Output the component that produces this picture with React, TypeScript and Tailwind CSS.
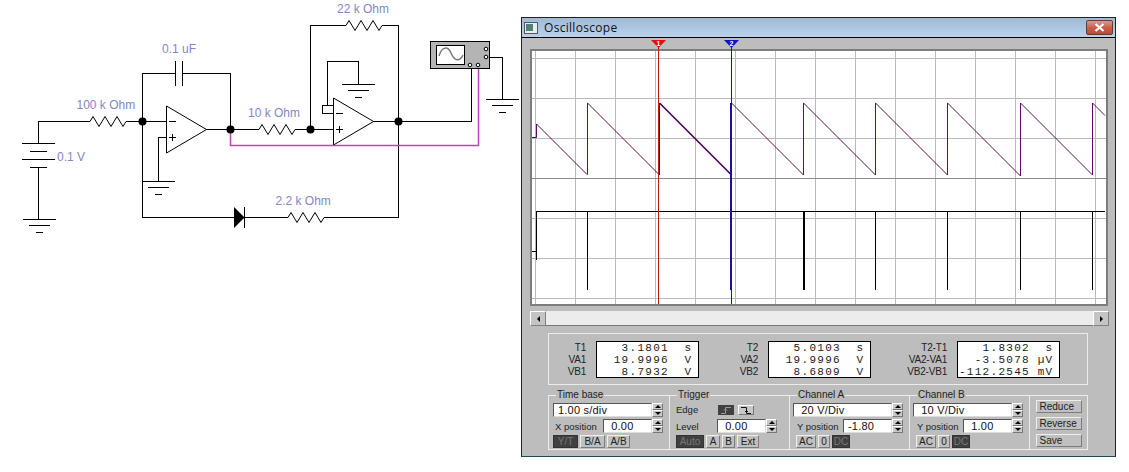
import type { ReactNode } from 'react';

const font = { fontFamily: '"Liberation Sans", Arial, sans-serif' };

const gridX = [535, 575, 615, 655, 695, 735, 775, 815, 855, 895, 935, 975, 1015, 1055, 1095];
const gridY = [58, 98, 138, 178, 218, 258, 298];
const peaks = [587, 659, 731, 803, 875, 947, 1020, 1092];

// zigzag resistor, 36px wide
function Res({ x, y }: { x: number; y: number }) {
  const d = `M${x} ${y}l3 -5l6 10l6 -10l6 10l6 -10l6 10l3 -5`;
  return <path d={d} fill="none" stroke="#000" strokeWidth="1" />;
}

function Gnd({ x, y }: { x: number; y: number }) {
  return (
    <g stroke="#000" shapeRendering="crispEdges">
      <path d={`M${x - 16} ${y}h33`} />
      <path d={`M${x - 10} ${y + 6}h21`} />
      <path d={`M${x - 3} ${y + 13}h7`} />
    </g>
  );
}

function Label({ x, y, children }: { x: number; y: number; children: string }) {
  return (
    <text x={x} y={y} fontSize="12" fill="#8585c4" fontFamily='"Liberation Sans", Arial, sans-serif'>
      {children}
    </text>
  );
}

function Schematic() {
  const nodes = [[142, 121], [230, 129], [310, 129], [398, 121]];
  return (
    <svg width="521" height="472" viewBox="0 0 521 472" className="shrink-0 block">
      <g fill="none" stroke="#000" strokeWidth="1" shapeRendering="crispEdges">
        {/* battery */}
        <path d="M38.5 143V121.5H90" />
        <path d="M22 143.5h33M30 151.5h17M22 159.5h33M30 167.5h17M38.5 167V219" />
        {/* first amp */}
        <path d="M126 121.5H166M142.5 121V217.5H234M142.5 121V73.5H175M182 73.5H230.5V129" />
        <path d="M175.5 61v25M182.5 61v25" />
        <path d="M166 137.5H158.5V182M206 129.5H259M295 129.5H333" />
        {/* second amp */}
        <path d="M310.5 129V25.5H346M382 25.5H398.5V217.5H324M245 217.5H288" />
        <path d="M333 105.5H322.5V113.5H333M327.5 105V61.5H358.5V84" />
        <path d="M373 121.5H471.5V65M486 57.5H502.5V99" />
      </g>
      <g fill="none" stroke="#000" strokeWidth="1">
        <path d="M166.5 106V153L206.5 129.5Z" />
        <path d="M333.5 98V145L373.5 121.5Z" />
      </g>
      <path d="M230.5 129V145.5H478.5V66" fill="none" stroke="#c040c0" strokeWidth="1.5" />
      <path d="M169 121.5h7M169 137.5h7M172.5 134v7M336 113.5h7M336 129.5h7M339.5 126v7" stroke="#000" shapeRendering="crispEdges" />
      <path d="M234 207V228L244.5 217.5Z" fill="#000" />
      <path d="M244.5 207v21" stroke="#000" />
      <Gnd x={39} y={219.5} />
      <Gnd x={158} y={181.5} />
      <Gnd x={358} y={84.5} />
      <Gnd x={502} y={99.5} />
      <Res x={90} y={121.5} />
      <Res x={259} y={129.5} />
      <Res x={346} y={25.5} />
      <Res x={288} y={217.5} />
      {nodes.map(([x, y]) => (
        <circle key={x} cx={x + 0.5} cy={y + 0.5} r="4" fill="#000" />
      ))}
      {/* scope symbol */}
      <rect x="430.5" y="41.5" width="59" height="27" fill="#b4b4b4" stroke="#000" />
      <rect x="436.5" y="45.5" width="28" height="19" fill="#fff" stroke="#000" />
      <path d="M439 56c3 -10 9 -10 12 -3s8 10 12 2" fill="none" stroke="#777" strokeWidth="1.5" />
      <g fill="#fff" stroke="#000">
        <circle cx="486" cy="49" r="1.8" />
        <circle cx="486" cy="57" r="1.8" />
        <circle cx="470" cy="65" r="1.8" />
        <circle cx="478" cy="65" r="1.8" />
      </g>
      <Label x={337} y={13}>22 k Ohm</Label>
      <Label x={162} y={53}>0.1 uF</Label>
      <Label x={76.5} y={109}>100 k Ohm</Label>
      <Label x={248} y={117}>10 k Ohm</Label>
      <Label x={275.5} y={205}>2.2 k Ohm</Label>
      <Label x={57} y={161}>0.1 V</Label>
    </svg>
  );
}

function Screen() {
  // each tooth: rise to the top, then a 45deg ramp down to the next peak
  const teeth = peaks.map((x, i) => {
    const end = peaks[i + 1];
    const from = i === 0 ? 174.5 : 103 + x - peaks[i - 1];
    const ramp = end ? `L${end + 0.5} ${103 + end - x}` : 'L1105 115.5';
    return `M${x + 0.5} ${from}V103${ramp}`;
  });
  return (
    <div className="w-[578px] h-[257px] bg-white border-2 border-[#7d7d7d] shrink-0">
      <svg width="574" height="253" viewBox="532 51 574 253" className="block overflow-visible">
        <g stroke="#b9b9b9" strokeWidth="1" shapeRendering="crispEdges">
          {gridX.map((x) => (
            <path key={x} d={`M${x + 0.5} 51V304`} />
          ))}
          {gridY.map((y) => (
            <path key={y} d={`M532 ${y + 0.5}H1106`} stroke={y === 178 ? '#8c8c8c' : '#b9b9b9'} />
          ))}
        </g>
        <g fill="none" stroke="#5a0a62" strokeWidth="1">
          <path d="M532 137.5H536.5V124L587 174.5" />
          {teeth.map((d) => (
            <path key={d} d={d} />
          ))}
        </g>
        <path d="M659.5 103L731 174.5" fill="none" stroke="#4a0a54" strokeWidth="1.6" />
        <g fill="none" stroke="#000" strokeWidth="1" shapeRendering="crispEdges">
          <path d="M532 251.5H536.5M536.5 260V211.5H1105" />
          <path d="M587.5 211V290M875.5 211V290M947.5 211V290M1020.5 211V290M1092.5 211V290" />
          <path d="M803.5 211V290" strokeWidth="2" />
        </g>
        {/* cursors */}
        <path d="M658.5 46V304" stroke="#c01818" shapeRendering="crispEdges" />
        <path d="M731.5 46V304" stroke="#1212c8" shapeRendering="crispEdges" />
        <path d="M731 103V290" stroke="#1a0f9a" strokeWidth="2" shapeRendering="crispEdges" />
        <path d="M651 40H666L658.5 48Z" fill="#e01010" />
        <path d="M724 40H739L731.5 48Z" fill="#1010d0" />
        <text x="658.5" y="46" fontSize="7" textAnchor="middle" fill="#fff" fontWeight="700" fontFamily='"Liberation Sans", sans-serif'>1</text>
        <text x="731.5" y="46" fontSize="7" textAnchor="middle" fill="#fff" fontWeight="700" fontFamily='"Liberation Sans", sans-serif'>2</text>
      </svg>
    </div>
  );
}

function ScrollBtn({ dir }: { dir: 'l' | 'r' }) {
  return (
    <div className="w-[16px] h-[15px] bg-[#c4c4c4] border border-t-white border-l-white border-r-[#808080] border-b-[#808080] flex items-center justify-center">
      <div
        className={
          dir === 'l'
            ? 'border-y-[3px] border-y-transparent border-r-[3px] border-r-black'
            : 'border-y-[3px] border-y-transparent border-l-[3px] border-l-black'
        }
      />
    </div>
  );
}

function Readout({ labels, values, w }: { labels: string[]; values: [string, string][]; w: string }) {
  return (
    <div className={`flex items-center gap-[10px] ${w} justify-end`}>
      <div className="flex flex-col items-end pt-[2px] text-[10px] leading-[12px] text-[#222] tracking-[-0.2px]">
        {labels.map((l) => (
          <div key={l}>{l}</div>
        ))}
      </div>
      <div
        className="w-[103px] h-[37px] bg-white border border-black flex flex-col justify-center pt-[1px] text-[11px] leading-[12px] text-[#222] pr-[6px]"
        style={{ fontFamily: '"Liberation Mono", monospace' }}
      >
        {values.map(([v, u]) => (
          <div key={v} className="flex justify-between whitespace-pre">
            <span className="w-[72px] text-right tracking-[1.3px]">{v}</span>
            <span className="tracking-[1px]">{u}</span>
          </div>
        ))}
      </div>
    </div>
  );
}

function Spin() {
  return (
    <div className="w-[11px] h-[14px] flex flex-col shrink-0">
      <div className="h-[7px] bg-[#c8c8c8] border border-t-white border-l-white border-r-[#777] border-b-[#777] flex items-center justify-center">
        <div className="border-x-[3px] border-x-transparent border-b-[3px] border-b-black" />
      </div>
      <div className="h-[7px] bg-[#c8c8c8] border border-t-white border-l-white border-r-[#777] border-b-[#777] flex items-center justify-center">
        <div className="border-x-[3px] border-x-transparent border-t-[3px] border-t-black" />
      </div>
    </div>
  );
}

function Field({ value, w }: { value: string; w: string }) {
  return (
    <div className="flex items-center">
      <div className={`${w} h-[14px] bg-white border border-[#555] border-r-[#ddd] border-b-[#ddd] pl-[4px] text-[11px] leading-[13px] text-[#111] tracking-[0.2px] whitespace-pre`}>
        {value}
      </div>
      <Spin />
    </div>
  );
}

function Btn({ children, w, on, left }: { children: ReactNode; w: string; on?: boolean; left?: boolean }) {
  return (
    <div
      className={
        on
          ? `${w} h-[13px] bg-[#404040] text-[#777] text-[10px] leading-[12px] text-center border border-[#333]`
          : `${w} h-[13px] bg-[#c0c0c0] text-[#222] text-[10px] leading-[11px] border border-t-[#eee] border-l-[#eee] border-r-[#7c7c7c] border-b-[#7c7c7c] ${left ? 'text-left pl-[3px]' : 'text-center'}`
      }
    >
      {children}
    </div>
  );
}

function Group({ title, w, children }: { title: string; w: string; children: ReactNode }) {
  return (
    <div className={`relative ${w} h-full border-r border-[#ececec] pt-[7px] flex flex-col`}>
      <span className="absolute left-[7px] -top-[7px] bg-[#bdbdbd] px-[1px] text-[10px] leading-[12px] text-[#222] whitespace-nowrap">
        {title}
      </span>
      {children}
    </div>
  );
}

function Channel({ name, range, y }: { name: string; range: string; y: string }) {
  return (
    <Group title={`Channel ${name}`} w="w-[120px] pl-[3px]">
      <Field value={range} w="w-[99px]" />
      <div className="flex items-center mt-[2px]">
        <span className="w-[50px] text-[9.5px] pl-[4px] leading-[13px] text-[#222] whitespace-nowrap">Y position</span>
        <Field value={y} w="w-[49px]" />
      </div>
      <div className="flex gap-[2px] mt-[2px] pl-[3px]">
        <Btn w="w-[20px]">AC</Btn>
        <Btn w="w-[12px]">0</Btn>
        <Btn w="w-[18px]" on>DC</Btn>
      </div>
    </Group>
  );
}

function Oscilloscope() {
  return (
    <div className="w-[595px] h-[440px] mt-[17px] shrink-0 flex flex-col border-t border-x border-[#222] border-b border-b-[#1c4a50] bg-[#bdbdbd] text-black" style={font}>
      <div className="h-[20px] shrink-0 flex items-center bg-gradient-to-b from-[#9fbad6] to-[#b9d2ec] border-b border-black pl-[2px] pr-[2px]">
        <div className="w-[14px] h-[12px] bg-[#e8eef0] border border-[#556] flex items-center pl-[1px]">
          <div className="w-[7px] h-[7px] bg-[#4f8272]" />
        </div>
        <span className="ml-[6px] text-[12px] text-[#111] tracking-[0.3px]" style={{ fontFamily: '"Open Sans", sans-serif' }}>
          Oscilloscope
        </span>
        <div className="ml-auto w-[27px] h-[15px] rounded-[2px] border border-[#6b3a32] bg-gradient-to-b from-[#d89a8c] via-[#c8604a] to-[#b84a38] flex items-center justify-center">
          <svg width="11" height="9" viewBox="0 0 11 9">
            <path d="M1.5 1l8 7M9.5 1l-8 7" stroke="#fff" strokeWidth="2.2" />
          </svg>
        </div>
      </div>
      <div className="flex-1 flex flex-col pl-[8px] pt-[11px]">
        <Screen />
        <div className="flex w-[579px] h-[15px] mt-[5px] border-b border-[#777]">
          <ScrollBtn dir="l" />
          <div className="flex-1 bg-[#ececec]" />
          <ScrollBtn dir="r" />
        </div>
        <div className="ml-[18px] mt-[7px] w-[540px] h-[52px] border border-[#ececec] flex items-center pl-[2px]">
          <Readout labels={['T1', 'VA1', 'VB1']} w="w-[148px]" values={[['3.1801', 's'], ['19.9996', 'V'], ['8.7932', 'V']]} />
          <Readout labels={['T2', 'VA2', 'VB2']} w="w-[172px]" values={[['5.0103', 's'], ['19.9996', 'V'], ['8.6809', 'V']]} />
          <Readout labels={['T2-T1', 'VA2-VA1', 'VB2-VB1']} w="w-[189px]" values={[['1.8302', 's'], ['-3.5078', 'µV'], ['-112.2545', 'mV']]} />
        </div>
        <div className="ml-[18px] mt-[10px] w-[540px] h-[55px] border border-[#ececec] flex">
          <Group title="Time base" w="w-[121px] pl-[4px]">
            <Field value="1.00 s/div" w="w-[99px]" />
            <div className="flex items-center mt-[2px]">
              <span className="w-[50px] text-[9.5px] pl-[2px] leading-[13px] text-[#222] whitespace-nowrap">X position</span>
              <Field value=" 0.00" w="w-[49px]" />
            </div>
            <div className="flex gap-[2px] mt-[2px]">
              <Btn w="w-[25px]" on>Y/T</Btn>
              <Btn w="w-[25px]">B/A</Btn>
              <Btn w="w-[23px]">A/B</Btn>
            </div>
          </Group>
          <Group title="Trigger" w="w-[120px] pl-[4px]">
            <div className="flex items-center h-[14px] pl-[2px]">
              <span className="w-[42px] text-[9.5px] text-[#222]">Edge</span>
              <div className="w-[16px] h-[10px] bg-[#404040] flex items-center justify-center">
                <svg width="10" height="7" viewBox="0 0 10 7">
                  <path d="M0 6.5H4.5V0.5H10M3 3.5L4.5 2L6 3.5" fill="none" stroke="#999" />
                </svg>
              </div>
              <div className="w-[16px] h-[10px] ml-[4px] bg-[#c8c8c8] border border-t-white border-l-white border-r-[#777] border-b-[#777] flex items-center justify-center">
                <svg width="10" height="7" viewBox="0 0 10 7">
                  <path d="M0 0.5H5.5V6.5H10M4 4L5.5 5.5L7 4" fill="none" stroke="#111" />
                </svg>
              </div>
            </div>
            <div className="flex items-center mt-[2px]">
              <span className="w-[43px] pl-[2px] text-[9.5px] leading-[13px] text-[#222]">Level</span>
              <Field value=" 0.00" w="w-[49px]" />
            </div>
            <div className="flex gap-[2px] mt-[2px] pl-[2px]">
              <Btn w="w-[28px]" on>Auto</Btn>
              <Btn w="w-[14px]">A</Btn>
              <Btn w="w-[13px]">B</Btn>
              <Btn w="w-[22px]">Ext</Btn>
            </div>
          </Group>
          <Channel name="A" range=" 20 V/Div" y="-1.80" />
          <Channel name="B" range=" 10 V/Div" y=" 1.00" />
          <div className="flex-1 flex flex-col items-center pt-[4px] gap-[4px]">
            <Btn w="w-[46px]" left>Reduce</Btn>
            <Btn w="w-[46px]" left>Reverse</Btn>
            <Btn w="w-[46px]" left>Save</Btn>
          </div>
        </div>
      </div>
    </div>
  );
}

export default function App() {
  return (
    <div className="flex w-[1129px] h-[472px] bg-white overflow-hidden">
      <Schematic />
      <Oscilloscope />
    </div>
  );
}
